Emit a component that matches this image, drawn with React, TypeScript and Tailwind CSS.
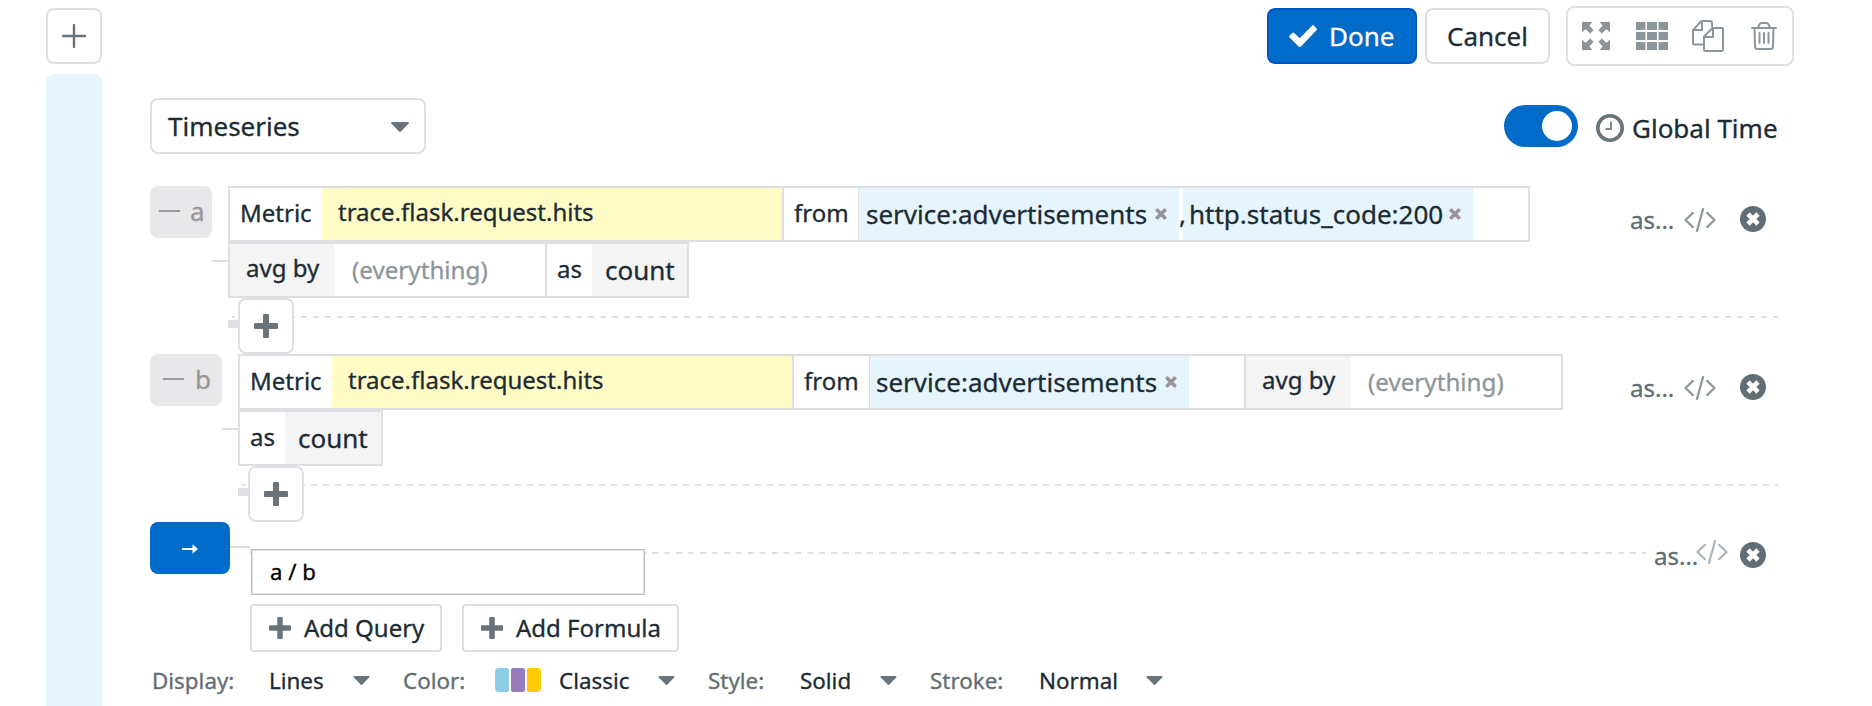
import React from "react";

function PlusBold({ className }: { className: string }) {
  return (
    <svg viewBox="0 0 24 24" className={className} fill="#68747a">
      <path d="M10 0h4a1 1 0 0 1 1 1v8h8a1 1 0 0 1 1 1v4a1 1 0 0 1-1 1h-8v8a1 1 0 0 1-1 1h-4a1 1 0 0 1-1-1v-8H1a1 1 0 0 1-1-1v-4a1 1 0 0 1 1-1h8V1a1 1 0 0 1 1-1z" />
    </svg>
  );
}

function Caret({ className }: { className: string }) {
  return (
    <svg viewBox="0 0 18 10" className={className} fill="#68747a">
      <path d="M1 0h16q1.4.2.6 1.6L10.200 9.300q-1.200 1.200-2.400 0L.4 1.600Q-.4.200 1 0z" />
    </svg>
  );
}

function Remove() {
  return (
    <svg viewBox="0 0 12 12" className="h-3 w-3 shrink-0" stroke="#989499" strokeWidth="3.6" fill="none">
      <path d="M1.300 1.300l9.400 9.400M10.700 1.300l-9.400 9.400" />
    </svg>
  );
}

function CodeIcon({ color }: { color: string }) {
  return (
    <svg viewBox="0 0 32 24" className="h-6 w-8 shrink-0" fill="none" stroke={color} strokeWidth="2.2">
      <path d="M9.500 4.200L1.500 12l8 7.800M22.500 4.200l8 7.800-8 7.800M19.300.3l-6.600 23.400" />
    </svg>
  );
}

function CloseCircle() {
  return (
    <svg viewBox="0 0 26 26" className="h-[26px] w-[26px] shrink-0">
      <circle cx="13" cy="13" r="13" fill="#616e74" />
      <path d="M8 8l10 10M18 8L8 18" stroke="#fff" strokeWidth="4.600" />
    </svg>
  );
}

function Actions() {
  return (
    <div className="mr-3 ml-auto flex h-[68px] items-center text-[24px] text-[#616e74]">
      <span className="w-[54px]">as...</span>
      <CodeIcon color="#8c969a" />
      <span className="mb-[3px] ml-6 flex">
        <CloseCircle />
      </span>
    </div>
  );
}

function Chip({ label, className }: { label: string; className: string }) {
  return (
    <div className={`flex h-[52px] shrink-0 items-center rounded-lg bg-[#e8e7e9] text-[26px] text-[#98979a] ${className}`}>
      <div className="mb-[2px] h-[2px] w-[21px] shrink-0 bg-[#98979a]" />
      <span className="pb-[2px]">{label}</span>
    </div>
  );
}

function MetricCells() {
  return (
    <>
      <div className="flex w-[92px] items-center pb-[3px] pl-[10px]">Metric</div>
      <div className="flex w-[460px] items-center bg-[#fffcc6] pb-[5px] pl-4">trace.flask.request.hits</div>
      <div className="flex w-[76px] items-center border-l-2 border-[#dfdee3] pb-[3px] pl-[10px]">from</div>
    </>
  );
}

function Tag({ text, className }: { text: string; className: string }) {
  return (
    <div className={`flex items-center justify-between bg-[#e6f5fd] pr-3 text-[26px] ${className}`}>
      <span>{text}</span>
      <Remove />
    </div>
  );
}

function AvgBy() {
  return (
    <>
      <div className="flex w-[105px] items-center bg-[#f4f4f5] pb-[5px] pl-4">avg by</div>
      <div className="flex w-[210px] items-center pl-[17px] text-[24.200px] text-[#8c969a]">(everything)</div>
    </>
  );
}

function AsCount() {
  return (
    <>
      <div className="flex w-[45px] items-center pb-[3px] pl-[10px]">as</div>
      <div className="flex grow items-center bg-[#f4f4f5] pl-[13px] text-[26px]">count</div>
    </>
  );
}

function AddStep({ dash }: { dash: string }) {
  return (
    <div className="grid h-14">
      <div
        className={`col-start-1 row-start-1 mt-[18px] ml-1 h-[2px] bg-[linear-gradient(to_right,#dfdee3_25%,transparent_25%,transparent_75%,#dfdee3_75%)] ${dash}`}
      />
      <div className="col-start-1 row-start-1 flex">
        <div className="mt-[22px] h-2 w-[10px] bg-[#dfdee3]" />
        <button className="flex h-14 w-14 items-center justify-center rounded-lg border-2 border-[#dfdee3] bg-white">
          <PlusBold className="h-6 w-6" />
        </button>
      </div>
    </div>
  );
}

function AddButton({ label, className }: { label: string; className: string }) {
  return (
    <button className={`flex h-12 items-center gap-[13px] rounded border-2 border-[#dfdee3] pl-[17px] text-[24px] whitespace-nowrap ${className}`}>
      <PlusBold className="h-[22px] w-[22px] shrink-0" />
      {label}
    </button>
  );
}

export default function App() {
  return (
    <div className="flex h-[706px] w-[1872px] overflow-hidden bg-white font-['Noto_Sans',sans-serif] whitespace-nowrap text-[#1c2b34] [-webkit-text-stroke:0.3px]">
      <aside className="ml-[46px] flex w-14 shrink-0 flex-col pt-2">
        <button className="flex h-14 w-14 items-center justify-center rounded-lg border-2 border-[#dfdee3]">
          <svg viewBox="0 0 24 24" className="h-6 w-6" stroke="#68747a" strokeWidth="2.4" strokeLinecap="round">
            <path d="M12 1v22M1 12h22" />
          </svg>
        </button>
        <div className="mt-[10px] grow rounded-t-lg bg-[#e6f5fd]" />
      </aside>

      <main className="ml-12 flex w-[1644px] shrink-0 flex-col pt-[6px]">
        <header className="flex h-[60px] items-center justify-end text-[26px]">
          <button className="flex h-14 w-[150px] items-center rounded-lg border-2 border-[#0055c4] bg-[#006bc9] pl-5 text-white">
            <svg viewBox="0 0 28 22" className="mr-[12px] h-[22px] w-7" fill="#fff">
              <path d="M23.200.4q.8-.6 1.500.1l3 3q.6.7 0 1.400L12 21.400q-1.200 1.100-2.400 0L.4 12.200q-.7-.7 0-1.500l3-2.900q.8-.7 1.500 0l5.700 5.400z" />
            </svg>
            Done
          </button>
          <button className="ml-2 flex h-14 w-[125px] items-center justify-center rounded-lg border-2 border-[#dfdee3]">Cancel</button>
          <div className="ml-4 flex h-[60px] w-[228px] items-center rounded-lg border-2 border-[#dfdee3] pl-[14px]">
            <svg viewBox="0 0 28 28" className="h-7 w-7" fill="#8c969a">
              <path d="M0 0h10.500L7.300 3.500l4.200 4.800-3.200 3.200-4.800-4.200L0 10.500z" />
              <path d="M28 0H17.500l3.200 3.500-4.200 4.800 3.200 3.200 4.800-4.200 3.500 3.200z" />
              <path d="M0 28h10.500l-3.200-3.500 4.200-4.800-3.200-3.200-4.800 4.200L0 17.500z" />
              <path d="M28 28H17.500l3.200-3.500-4.200-4.800 3.200-3.200 4.800 4.200 3.500-3.200z" />
            </svg>
            <svg viewBox="0 0 32 28" className="ml-[26px] h-7 w-8" fill="#8c969a">
              <path d="M0 0h9.500v8H0zM11 0h10v8H11zM22.500 0H32v8h-9.500zM0 10h9.500v8H0zM11 10h10v8H11zM22.500 10H32v8h-9.500zM0 20h9.500v8H0zM11 20h10v8H11zM22.500 20H32v8h-9.500z" />
            </svg>
            <svg viewBox="0 0 32 32" className="ml-6 h-8 w-8" fill="none" stroke="#8c969a" strokeWidth="2" strokeLinejoin="round">
              <path d="M11.500 24.500H2q-1 0-1-1V10l8.500-9H18q2 0 2 2v4M10 1v9H1" />
              <path d="M13 31q-1 0-1-1V16.500L20.500 8H30q1 0 1 1v21q0 1-1 1zM21 8v9h-9" />
            </svg>
            <svg viewBox="0 0 26 28" className="ml-[27px] h-7 w-[26px]" fill="none" stroke="#8c969a" strokeWidth="2" strokeLinecap="round">
              <path d="M1 6h24M7 5.500l1.500-3Q9.200 1 10.500 1h5q1.300 0 2 1.500l1.500 3M3.500 6.500L4 24.500Q4 27 6.500 27h13q2.500 0 2.500-2.500l.5-18M8.500 11v10M13 11v10M17.500 11v10" />
            </svg>
          </div>
        </header>

        <div className="mt-8 flex h-14 shrink-0 items-center text-[26px]">
          <button className="flex h-14 w-[276px] items-center justify-between rounded-lg border-2 border-[#dfdee3] pr-[15px] pl-4">
            Timeseries
            <Caret className="mt-[2px] h-[10px] w-[18px]" />
          </button>
          <div className="ml-auto flex h-[42px] w-[74px] items-center justify-end rounded-full bg-[#006bc9] pr-[6px]">
            <div className="h-[30px] w-[30px] rounded-full bg-white" />
          </div>
          <svg viewBox="0 0 28 28" className="mt-1 ml-[18px] h-7 w-7" fill="none">
            <circle cx="14" cy="14" r="12.200" stroke="#68747a" strokeWidth="3.600" />
            <path d="M15 7.500V15H9.500" stroke="#7d878c" strokeWidth="2" />
          </svg>
          <span className="mr-4 ml-2 w-[146px] pt-1">Global Time</span>
        </div>

        <section className="mt-8 flex h-[168px] w-[1628px] shrink-0 text-[24px]">
          <Chip label="a" className="w-[62px] gap-[10px] pl-[9px]" />
          <div className="mt-[74px] h-[2px] w-4 bg-[#dfdee3]" />
          <div className="flex grow flex-col">
            <div className="flex">
              <div>
                <div className="flex h-14 w-[1302px] border-2 border-[#dfdee3]">
                  <MetricCells />
                  <Tag text="service:advertisements" className="w-[321px] border-l border-[#dfdee3] pl-[7px]" />
                  <span className="z-10 flex w-1 items-center text-[26px]">,</span>
                  <Tag text="http.status_code:200" className="w-[290px] pl-[6px]" />
                </div>
                <div className="flex h-14 w-[461px] border-2 border-[#dfdee3]">
                  <AvgBy />
                  <div className="w-[2px] bg-[#dfdee3]" />
                  <AsCount />
                </div>
              </div>
              <Actions />
            </div>
            <AddStep dash="bg-[length:11.984px_2px]" />
          </div>
        </section>

        <section className="flex h-[168px] w-[1628px] shrink-0 text-[24px]">
          <Chip label="b" className="w-[72px] gap-[11px] pl-[13px]" />
          <div className="mt-[74px] h-[2px] w-4 bg-[#dfdee3]" />
          <div className="flex grow flex-col">
            <div className="flex">
              <div>
                <div className="flex h-14 w-[1325px] border-2 border-[#dfdee3]">
                  <MetricCells />
                  <Tag text="service:advertisements" className="ml-px w-[320px] border-l border-[#dfdee3] pl-[6px]" />
                  <div className="grow border-r-2 border-[#dfdee3]" />
                  <AvgBy />
                </div>
                <div className="flex h-14 w-[145px] border-2 border-[#dfdee3]">
                  <AsCount />
                </div>
              </div>
              <Actions />
            </div>
            <AddStep dash="bg-[length:12px_2px]" />
          </div>
        </section>

        <section className="flex h-[130px] w-[1628px] shrink-0">
          <button className="flex h-[52px] w-20 items-center justify-center rounded-lg bg-[#006bc9]">
            <svg viewBox="0 0 16 10" className="mt-[2px] h-[10px] w-4" fill="#fff">
              <path d="M0 4h10.500V.2L16 5l-5.500 4.800V6H0z" />
            </svg>
          </button>
          <div className="mt-6 h-[2px] w-5 bg-[#dfdee3]" />
          <div className="flex flex-col">
            <div className="grid h-[82px] w-[1396px]">
              <div className="col-start-1 row-start-1 mt-[30px] h-[2px] bg-[linear-gradient(to_right,#dfdee3_25%,transparent_25%,transparent_75%,#dfdee3_75%)] bg-[length:11.932px_2px]" />
              <div className="col-start-1 row-start-1 mt-[27px] ml-px flex h-[46px] w-[394px] items-center border border-[#b9b9b9] bg-white pl-[18px] text-[22.200px] text-black shadow-[inset_0_0_0_1px_#e4e4e4]">
                a / b
              </div>
            </div>
            <div className="flex gap-5">
              <AddButton label="Add Query" className="w-[192px]" />
              <AddButton label="Add Formula" className="w-[217px]" />
            </div>
          </div>
          <div className="mt-[18px] mr-3 ml-auto flex h-8 text-[24px] text-[#616e74]">
            <span className="w-[42px] leading-[32px]">as...</span>
            <CodeIcon color="#aab2b6" />
            <span className="mt-[2px] ml-3 flex">
              <CloseCircle />
            </span>
          </div>
        </section>

        <footer className="mt-1 flex h-12 shrink-0 items-center pl-[2px] text-[22.400px]">
          <span className="w-[117px] pt-[2px] text-[#616e74]">Display:</span>
          <span className="w-[84px] pt-[2px]">Lines</span>
          <Caret className="mr-[33px] h-[9px] w-[17px]" />
          <span className="w-[92px] pt-[2px] text-[#616e74]">Color:</span>
          <div className="mr-[18px] flex h-6 w-[46px] gap-[2px] overflow-hidden rounded">
            <div className="grow rounded-xs bg-[#8ccde6]" />
            <div className="grow rounded-xs bg-[#987dbd]" />
            <div className="grow rounded-xs bg-[#ffca00]" />
          </div>
          <span className="w-[99px] pt-[2px]">Classic</span>
          <Caret className="mr-[33px] h-[9px] w-[17px]" />
          <span className="w-[92px] pt-[2px] text-[#616e74]">Style:</span>
          <span className="w-[80px] pt-[2px]">Solid</span>
          <Caret className="mr-[33px] h-[9px] w-[17px]" />
          <span className="w-[109px] pt-[2px] text-[#616e74]">Stroke:</span>
          <span className="w-[107px] pt-[2px]">Normal</span>
          <Caret className="h-[9px] w-[17px]" />
        </footer>
      </main>
    </div>
  );
}
